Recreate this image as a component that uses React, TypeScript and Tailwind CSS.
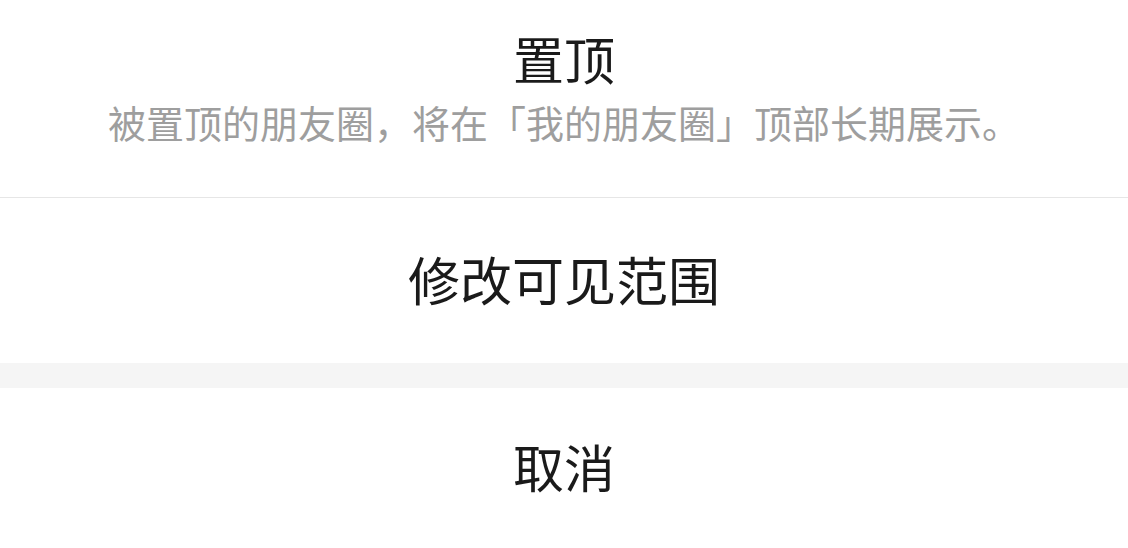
import React from "react";

export default function App() {
  const font = { fontFamily: '"Noto Sans CJK SC", "Noto Sans", sans-serif' };
  return (
    <div className="w-[1128px] h-[548px] bg-white overflow-hidden flex flex-col" style={font}>
      <div className="h-[197px] flex flex-col items-center pt-[28px]">
        <div className="text-[51px] leading-[60px] text-[#1a1a1a]">置顶</div>
        <div className="mt-[9px] text-[38px] leading-[50px] text-[#9e9e9e]">
          被置顶的朋友圈，将在「我的朋友圈」顶部长期展示。
        </div>
      </div>
      <div className="h-px bg-[#e6e6e6]" />
      <div className="h-[165px] flex items-center justify-center">
        <div className="text-[52px] leading-[60px] text-[#1a1a1a] mb-[4px]">修改可见范围</div>
      </div>
      <div className="h-[25px] bg-[#f5f5f5]" />
      <div className="flex-1 flex items-center justify-center">
        <div className="text-[51px] leading-[60px] text-[#1a1a1a] mb-[4px]">取消</div>
      </div>
    </div>
  );
}
